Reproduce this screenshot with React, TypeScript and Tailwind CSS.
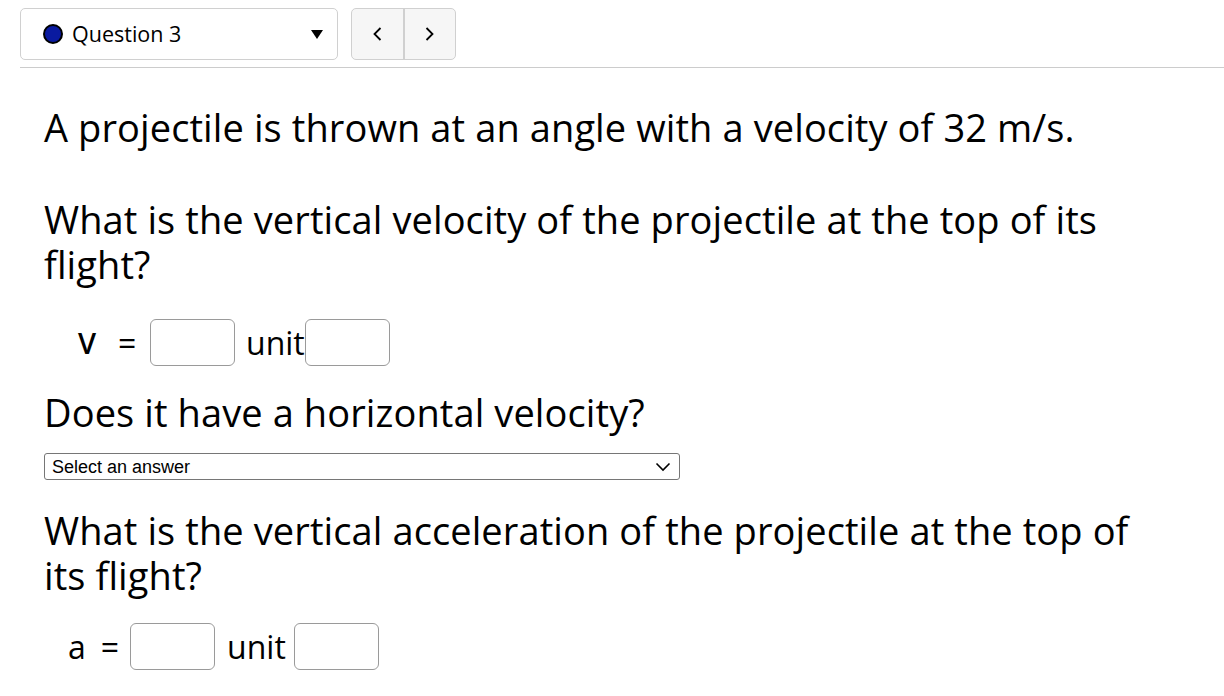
import React from "react";

const bodyFont = { fontFamily: "'Open Sans', sans-serif", fontVariantLigatures: "none" as const };

function AnswerBox() {
  return <input type="text" className="h-[47px] w-[85px] rounded-[6px] border border-[#9a9a9a] bg-white outline-none" />;
}

export default function App() {
  return (
    <div className="min-h-[696px] w-[1224px] bg-white text-black" style={bodyFont}>
      <div className="flex items-center gap-[13px] pl-[20px] pt-[8px]">
        <div className="flex h-[52px] w-[318px] items-center rounded-[5px] border border-[#d0d0d0] pl-[22px] pr-[14px]">
          <span className="h-[20px] w-[20px] rounded-full border-2 border-black bg-[#0a1aa0]" />
          <span className="ml-[9px] text-[21.5px]">Question 3</span>
          <svg className="ml-auto" width="12" height="9" viewBox="0 0 12 9">
            <path d="M0 0 H12 L6 9 Z" fill="black" />
          </svg>
        </div>
        <div className="flex h-[52px] w-[105px] rounded-[5px] border border-[#d0d0d0] bg-[#f6f6f6]">
          <div className="flex flex-1 items-center justify-center border-r-2 border-[#d0d0d0]">
            <svg width="9" height="14" viewBox="0 0 9 14">
              <path d="M7.5 1 L1.5 7 L7.5 13" fill="none" stroke="black" strokeWidth="1.8" />
            </svg>
          </div>
          <div className="flex flex-1 items-center justify-center">
            <svg width="9" height="14" viewBox="0 0 9 14">
              <path d="M1.5 1 L7.5 7 L1.5 13" fill="none" stroke="black" strokeWidth="1.8" />
            </svg>
          </div>
        </div>
      </div>
      <div className="ml-[20px] mt-[7px] h-px bg-[#cccccc]" />

      <div className="pl-[44px] pr-[64px] text-[38px] leading-[45px] tracking-[0.1px]">
        <p className="mt-[37px]">A projectile is thrown at an angle with a velocity of 32 m/s.</p>
        <p className="mt-[47px]">What is the vertical velocity of the projectile at the top of its flight?</p>

        <div className="mt-[32px] flex items-center text-[32px] tracking-normal">
          <span className="ml-[34px] w-[30px] text-[29px] font-semibold">V</span>
          <span className="ml-[10px] w-[27px]">=</span>
          <span className="ml-[5px]"><AnswerBox /></span>
          <span className="ml-[11px]">unit</span>
          <AnswerBox />
        </div>

        <p className="mt-[24px]">Does it have a horizontal velocity?</p>

        <div className="relative mt-[18px] flex h-[27px] w-[636px] items-center rounded-[3px] border border-[#767676] pl-[7px] tracking-normal" style={{ fontFamily: "'Liberation Sans', Arial, sans-serif" }}>
          <span className="text-[18px] leading-none">Select an answer</span>
          <svg className="absolute right-[8px] top-[8px]" width="16" height="10" viewBox="0 0 16 10">
            <path d="M1.5 1.5 L8 8 L14.5 1.5" fill="none" stroke="black" strokeWidth="1.6" />
          </svg>
        </div>

        <p className="mt-[28px]">What is the vertical acceleration of the projectile at the top of its flight?</p>

        <div className="mt-[25px] flex items-center text-[32px] tracking-normal">
          <span className="ml-[24px]">a</span>
          <span className="ml-[15px]">=</span>
          <span className="ml-[11px]"><AnswerBox /></span>
          <span className="ml-[12px]">unit</span>
          <span className="ml-[8px]"><AnswerBox /></span>
        </div>
      </div>
    </div>
  );
}
